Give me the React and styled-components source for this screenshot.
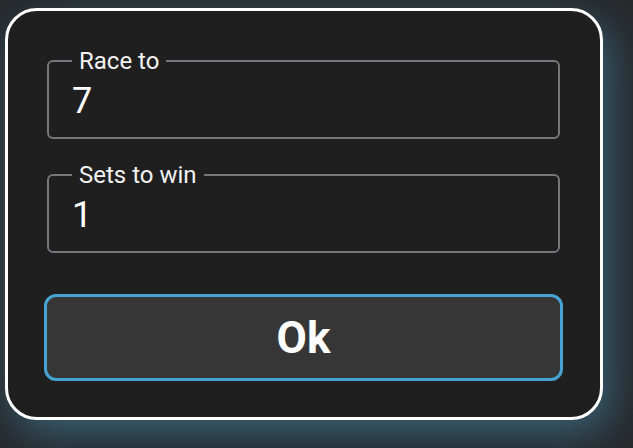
import React from "react";
import styled, { createGlobalStyle } from "styled-components";

const Global = createGlobalStyle`
  html, body { margin: 0; padding: 0; background: #27292c; }
  body { width: 633px; height: 448px; overflow: hidden; font-family: Roboto, "Noto Sans", sans-serif; }
  #root { padding: 8px 0 0 5px; }
`;

const Card = styled.div`
  box-sizing: border-box;
  width: 598px;
  height: 412px;
  border: 3px solid #ffffff;
  border-radius: 32px;
  background: #1f1f1f;
  box-shadow: 8px 14px 40px rgba(62, 115, 140, 0.75);
  padding: 38px 37px 35px 36px;
  display: flex;
  flex-direction: column;
`;

const Field = styled.fieldset`
  box-sizing: border-box;
  margin: 0 3px ${(p) => p.$gap}px 3px;
  height: 90px;
  border: 2px solid #78757b;
  border-radius: 6px;
  padding: 0 0 0 23px;
  min-width: 0;
`;

const Legend = styled.legend`
  padding: 0 7px;
  font-size: 24px;
  line-height: 24px;
  color: #f2f2f2;
`;

const Value = styled.div`
  font-size: 36px;
  line-height: 40px;
  color: #ffffff;
  margin-top: 8px;
`;

const OkButton = styled.button`
  box-sizing: border-box;
  margin-top: 41px;
  height: 87px;
  width: 100%;
  border: 3px solid #47a3d1;
  border-radius: 12px;
  background: #363636;
  color: #ffffff;
  font-family: Roboto, "Noto Sans", sans-serif;
  font-weight: 700;
  font-size: 44px;
  cursor: pointer;
  padding: 0;
`;

export default function App() {
  return (
    <>
      <Global />
      <Card>
        <Field $gap={24}>
          <Legend>Race to</Legend>
          <Value>7</Value>
        </Field>
        <Field $gap={0}>
          <Legend>Sets to win</Legend>
          <Value>1</Value>
        </Field>
        <OkButton>Ok</OkButton>
      </Card>
    </>
  );
}
